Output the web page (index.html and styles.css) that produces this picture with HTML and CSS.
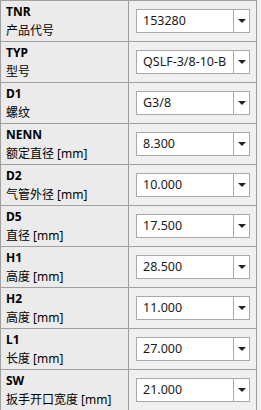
FILE: index.html
```html
<!DOCTYPE html>
<html lang="zh">
<head>
  <meta charset="UTF-8">
  <title>Parameters</title>
  <link rel="stylesheet" href="styles.css">
</head>
<body>
  <div class="grid">
    <div class="row">
      <div class="label"><b>TNR</b><span>产品代号</span></div>
      <div class="cell"><div class="combo"><span class="value">153280</span><span class="drop"></span></div></div>
    </div>
    <div class="row">
      <div class="label"><b>TYP</b><span>型号</span></div>
      <div class="cell"><div class="combo"><span class="value">QSLF-3/8-10-B</span><span class="drop"></span></div></div>
    </div>
    <div class="row">
      <div class="label"><b>D1</b><span>螺纹</span></div>
      <div class="cell"><div class="combo"><span class="value">G3/8</span><span class="drop"></span></div></div>
    </div>
    <div class="row">
      <div class="label"><b>NENN</b><span>额定直径 [mm]</span></div>
      <div class="cell"><div class="combo"><span class="value">8.300</span><span class="drop"></span></div></div>
    </div>
    <div class="row">
      <div class="label"><b>D2</b><span>气管外径 [mm]</span></div>
      <div class="cell"><div class="combo"><span class="value">10.000</span><span class="drop"></span></div></div>
    </div>
    <div class="row">
      <div class="label"><b>D5</b><span>直径 [mm]</span></div>
      <div class="cell"><div class="combo"><span class="value">17.500</span><span class="drop"></span></div></div>
    </div>
    <div class="row">
      <div class="label"><b>H1</b><span>高度 [mm]</span></div>
      <div class="cell"><div class="combo"><span class="value">28.500</span><span class="drop"></span></div></div>
    </div>
    <div class="row">
      <div class="label"><b>H2</b><span>高度 [mm]</span></div>
      <div class="cell"><div class="combo"><span class="value">11.000</span><span class="drop"></span></div></div>
    </div>
    <div class="row">
      <div class="label"><b>L1</b><span>长度 [mm]</span></div>
      <div class="cell"><div class="combo"><span class="value">27.000</span><span class="drop"></span></div></div>
    </div>
    <div class="row">
      <div class="label"><b>SW</b><span>扳手开口宽度 [mm]</span></div>
      <div class="cell"><div class="combo"><span class="value">21.000</span><span class="drop"></span></div></div>
    </div>
  </div>
</body>
</html>
```

FILE: styles.css
```css
body {
  margin: 0;
  background: #f0f0f0;
  font-family: "Noto Sans", "Noto Sans CJK SC", sans-serif;
  font-size: 12px;
  color: #000;
}
.grid {
  width: 255px;
  border-top: 1px solid #a0a0a0;
  border-left: 1px solid #a0a0a0;
  border-right: 1px solid #a0a0a0;
}
.row {
  display: grid;
  grid-template-columns: 128px 1fr;
  height: 40px;
  border-bottom: 1px solid #a0a0a0;
}
.label {
  background: #ebebeb;
  border-right: 1px solid #a0a0a0;
  padding: 1px 0 0 5px;
  display: flex;
  flex-direction: column;
  line-height: 19px;
}
.label b {
  font-weight: 700;
  font-size: 12px;
}
.label span {
  font-size: 12px;
}
.cell {
  background: #f0f0f0;
  padding: 0 5px 0 7px;
  display: flex;
  align-items: center;
}
.combo {
  display: flex;
  width: 114px;
  height: 24px;
  box-sizing: border-box;
  border: 1px solid #a9a9a9;
  background: #fff;
}
.value {
  flex: 1;
  padding-left: 6px;
  line-height: 22px;
  font-size: 12.5px;
  color: #1a1a1a;
  white-space: nowrap;
  overflow: hidden;
}
.drop {
  width: 15px;
  border-left: 1px solid #a9a9a9;
  position: relative;
}
.drop::after {
  content: "";
  position: absolute;
  left: 4px;
  top: 9px;
  border-left: 4px solid transparent;
  border-right: 4px solid transparent;
  border-top: 4px solid #222;
}
```
